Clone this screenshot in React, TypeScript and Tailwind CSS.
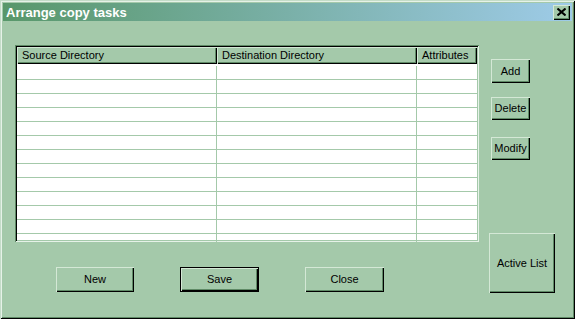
import React from "react";

const raised =
  "bg-[#a4c9aa] shadow-[inset_1px_1px_0_#d4e8d6,inset_-1px_-1px_0_#000,inset_-2px_-2px_0_#5f8a66]";
const defaultBtn =
  "bg-[#a4c9aa] border border-black shadow-[inset_1px_1px_0_#d4e8d6,inset_-1px_-1px_0_#000,inset_-2px_-2px_0_#5f8a66]";

function Btn({ label, className, isDefault }: { label: string; className: string; isDefault?: boolean }) {
  return (
    <div
      className={`${isDefault ? defaultBtn : raised} ${className} flex items-center justify-center text-[11px] text-black`}
    >
      {label}
    </div>
  );
}

export default function App() {
  const rows = Array.from({ length: 12 });
  return (
    <div
      className="w-[575px] h-[319px] bg-[#a4c9aa] p-[3px] flex flex-col shadow-[inset_1px_1px_0_#c4dcc8,inset_-1px_-1px_0_#000,inset_2px_2px_0_#e6f2e8,inset_-2px_-2px_0_#5f8a66]"
      style={{ fontFamily: '"Liberation Sans", Arial, sans-serif' }}
    >
      {/* Title bar */}
      <div className="h-[18px] flex items-center justify-between bg-linear-to-r from-[#58976a] via-[#7ab0a8] to-[#9ecbe8] pl-[3px] pr-[2px]">
        <span className="text-white font-bold text-[13px] leading-none">Arrange copy tasks</span>
        <div className={`${raised} w-[17px] h-[15px] flex items-center justify-center pb-[1px] pr-[1px]`}>
          <svg width="9" height="8" viewBox="0 0 9 8">
            <path d="M0.5 0.5 L8.5 7.5 M8.5 0.5 L0.5 7.5" stroke="#000" strokeWidth="2" />
          </svg>
        </div>
      </div>

      {/* Body */}
      <div className="flex flex-row pl-[12px] pt-[24px]">
        {/* Left column */}
        <div className="flex flex-col">
          <div className="w-[464px] h-[197px] p-[2px] bg-white shadow-[inset_1px_1px_0_#5f8a66,inset_-1px_-1px_0_#e6f2e8,inset_2px_2px_0_#000,inset_-2px_-2px_0_#a4c9aa] overflow-hidden">
            <div className="flex flex-row h-[17px] text-[11px] text-black">
              <div className={`${raised} w-[200px] pl-[5px] flex items-center`}>Source Directory</div>
              <div className={`${raised} w-[200px] pl-[5px] flex items-center`}>Destination Directory</div>
              <div className={`${raised} w-[60px] pl-[5px] flex items-center`}>Attributes</div>
            </div>
            <div className="pt-[2px]">
              {rows.map((_, i) => (
                <div key={i} className="flex flex-row h-[14px] border-b border-[#a4c9aa]">
                  <div className="w-[200px] border-r border-[#a4c9aa]" />
                  <div className="w-[200px] border-r border-[#a4c9aa]" />
                  <div className="w-[60px]" />
                </div>
              ))}
              <div className="flex flex-row h-[14px]">
                <div className="w-[200px] border-r border-[#a4c9aa]" />
                <div className="w-[200px] border-r border-[#a4c9aa]" />
                <div className="w-[60px]" />
              </div>
            </div>
          </div>
          <div className="flex flex-row pl-[41px] pt-[25px] gap-[46px]">
            <Btn label="New" className="w-[78px] h-[25px]" />
            <Btn label="Save" className="w-[79px] h-[25px]" isDefault />
            <Btn label="Close" className="w-[79px] h-[25px]" />
          </div>
        </div>

        {/* Right column */}
        <div className="flex flex-col">
          <div className="flex flex-col pl-[12px] pt-[14px] gap-[15px]">
            <Btn label="Add" className="w-[39px] h-[24px]" />
            <Btn label="Delete" className="w-[39px] h-[23px] mt-[-1px]" />
            <Btn label="Modify" className="w-[39px] h-[23px] mt-[2px]" />
          </div>
          <div className="pl-[10px] pt-[73px]">
            <Btn label="Active List" className="w-[66px] h-[60px]" />
          </div>
        </div>
      </div>
    </div>
  );
}
